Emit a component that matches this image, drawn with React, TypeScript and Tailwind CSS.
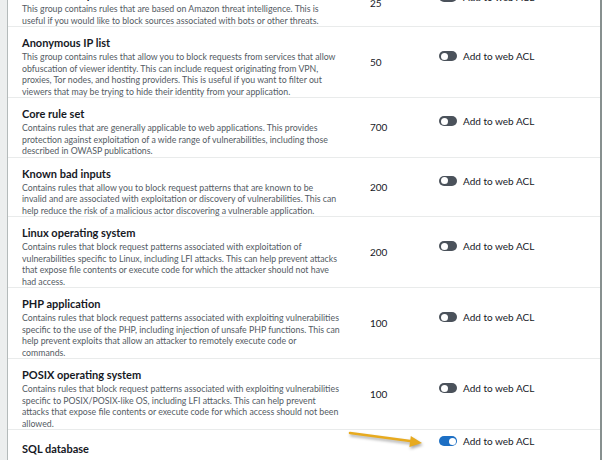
import React from "react";

type Row = {
  title: string;
  lines: string[];
  cap: string;
  on?: boolean;
};

const rows: Row[] = [
  {
    title: "Amazon IP reputation list",
    lines: [
      "This group contains rules that are based on Amazon threat intelligence. This is",
      "useful if you would like to block sources associated with bots or other threats.",
    ],
    cap: "25",
  },
  {
    title: "Anonymous IP list",
    lines: [
      "This group contains rules that allow you to block requests from services that allow",
      "obfuscation of viewer identity. This can include request originating from VPN,",
      "proxies, Tor nodes, and hosting providers. This is useful if you want to filter out",
      "viewers that may be trying to hide their identity from your application.",
    ],
    cap: "50",
  },
  {
    title: "Core rule set",
    lines: [
      "Contains rules that are generally applicable to web applications. This provides",
      "protection against exploitation of a wide range of vulnerabilities, including those",
      "described in OWASP publications.",
    ],
    cap: "700",
  },
  {
    title: "Known bad inputs",
    lines: [
      "Contains rules that allow you to block request patterns that are known to be",
      "invalid and are associated with exploitation or discovery of vulnerabilities. This can",
      "help reduce the risk of a malicious actor discovering a vulnerable application.",
    ],
    cap: "200",
  },
  {
    title: "Linux operating system",
    lines: [
      "Contains rules that block request patterns associated with exploitation of",
      "vulnerabilities specific to Linux, including LFI attacks. This can help prevent attacks",
      "that expose file contents or execute code for which the attacker should not have",
      "had access.",
    ],
    cap: "200",
  },
  {
    title: "PHP application",
    lines: [
      "Contains rules that block request patterns associated with exploiting vulnerabilities",
      "specific to the use of the PHP, including injection of unsafe PHP functions. This can",
      "help prevent exploits that allow an attacker to remotely execute code or",
      "commands.",
    ],
    cap: "100",
  },
  {
    title: "POSIX operating system",
    lines: [
      "Contains rules that block request patterns associated with exploiting vulnerabilities",
      "specific to POSIX/POSIX-like OS, including LFI attacks. This can help prevent",
      "attacks that expose file contents or execute code for which access should not been",
      "allowed.",
    ],
    cap: "100",
  },
];

function Toggle({ on }: { on?: boolean }) {
  return (
    <div className="flex items-center gap-[6px]">
      <span
        className={
          on
            ? "flex h-[10px] w-[18px] items-center justify-end rounded-full bg-[#1d6fc4] p-[1.5px]"
            : "flex h-[10px] w-[18px] items-center justify-start rounded-full bg-[#4b525b] p-[1.5px]"
        }
      >
        <span className="h-[7px] w-[7px] rounded-full bg-white" />
      </span>
      <span className="text-[10px] leading-[12px] text-[#16191f]">Add to web ACL</span>
    </div>
  );
}

export default function App() {
  return (
    <div
      className="relative flex h-[460px] w-[602px] overflow-hidden bg-white"
      style={{ fontFamily: "Lato, 'Open Sans', sans-serif" }}
    >
      <div className="w-[7px] shrink-0 bg-[#eceeee]" />
      <div className="flex-1 border-l border-r-2 border-l-[#b4baba] border-r-[#87908f] bg-white">
        <div className="-mt-[21px] flex flex-col">
          {rows.map((r, i) => (
            <div
              key={i}
              className="grid grid-cols-[348px_69px_1fr] border-b border-[#e9ebeb] pl-[14px]"
            >
              <div className="pt-[9px]">
                <div className="text-[11px] font-bold leading-[13px] text-[#16191f]">{r.title}</div>
                <div className="mt-[2px] text-[8.75px] leading-[11.5px] text-[#545b64]">
                  {r.lines.map((l, j) => (
                    <div key={j} className="whitespace-nowrap">
                      {l}
                    </div>
                  ))}
                </div>
              </div>
              <div className="self-center text-[10px] leading-[12px] text-[#16191f]">{r.cap}</div>
              <div className="self-center pb-3">
                <Toggle />
              </div>
            </div>
          ))}
          <div className="grid grid-cols-[348px_69px_1fr] pl-[14px]">
            <div className="pt-[12px]">
              <div className="text-[11px] font-bold leading-[13px] text-[#16191f]">SQL database</div>
            </div>
            <div />
            <div className="pt-[5px]">
              <Toggle on />
            </div>
          </div>
        </div>
      </div>
      <svg
        className="pointer-events-none absolute left-[340px] top-[420px]"
        width="90"
        height="36"
        viewBox="0 0 90 36"
        style={{ filter: "drop-shadow(1px 2px 1.5px rgba(0,0,0,0.35))" }}
      >
        <line x1="10" y1="13" x2="72" y2="21.3" stroke="#e7aa1f" strokeWidth="2.6" strokeLinecap="round" />
        <polygon points="82,23 70.8,16 69.4,27" fill="#e7aa1f" />
      </svg>
    </div>
  );
}
